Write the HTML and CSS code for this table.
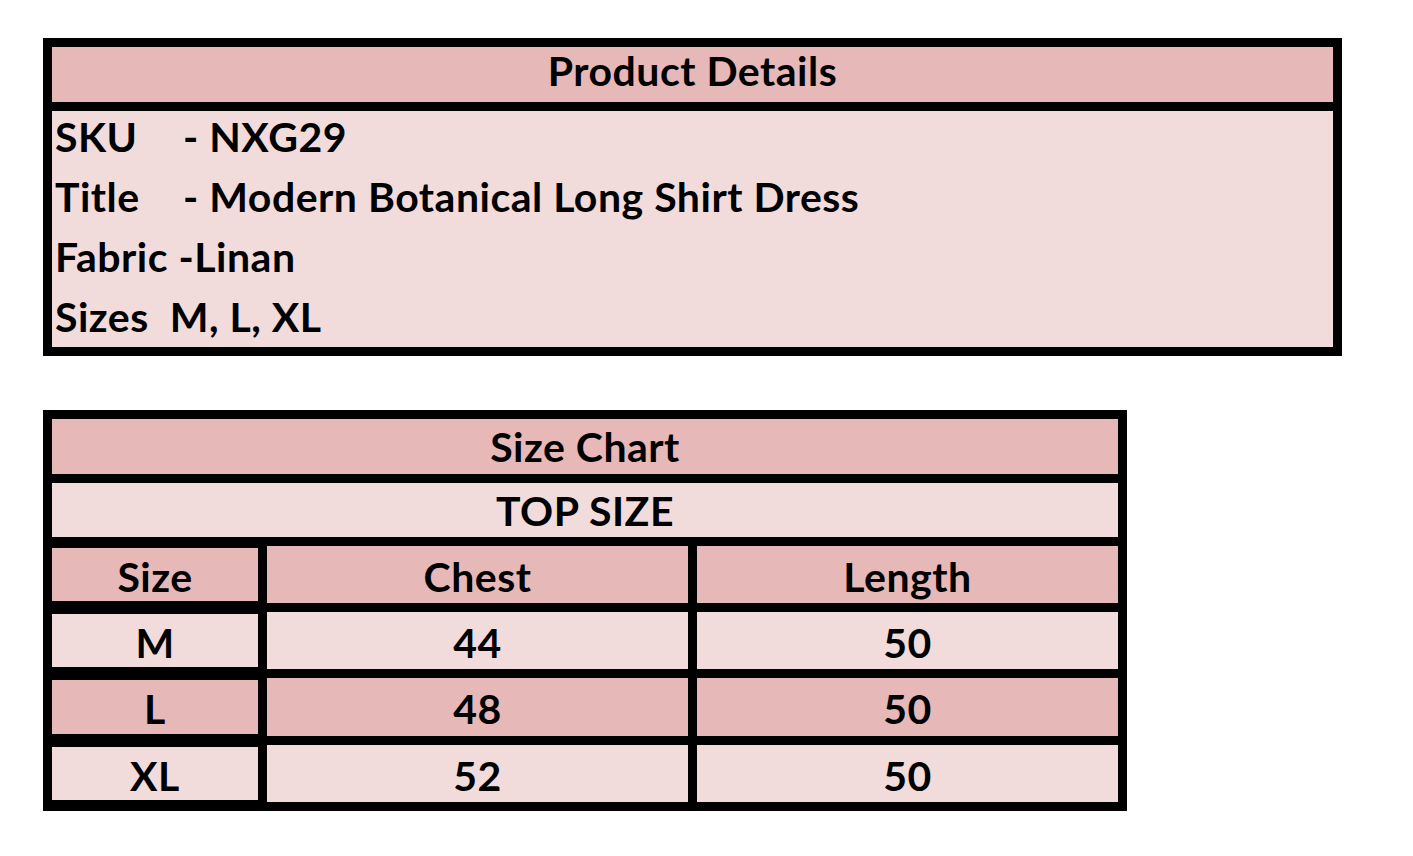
FILE: index.html
```html
<!DOCTYPE html>
<html lang="en">
<head>
<meta charset="utf-8">
<title>Product Details</title>
<link rel="stylesheet" href="styles.css">
</head>
<body>
<main class="page">
  <section class="details">
    <h1 class="details-head">Product Details</h1>
    <div class="details-body">
      <div class="line"><span class="label">SKU</span><span>- NXG29</span></div>
      <div class="line"><span class="label">Title</span><span>- Modern Botanical Long Shirt Dress</span></div>
      <div class="line"><span>Fabric -Linan</span></div>
      <div class="line"><span class="pre">Sizes  M, L, XL</span></div>
    </div>
  </section>

  <section class="chart">
    <div class="cell dark span">Size Chart</div>
    <div class="cell light span">TOP SIZE</div>
    <div class="cell dark first">Size</div>
    <div class="cell dark">Chest</div>
    <div class="cell dark">Length</div>
    <div class="cell light first">M</div>
    <div class="cell light">44</div>
    <div class="cell light">50</div>
    <div class="cell dark first">L</div>
    <div class="cell dark">48</div>
    <div class="cell dark">50</div>
    <div class="cell light first">XL</div>
    <div class="cell light">52</div>
    <div class="cell light">50</div>
  </section>
</main>
</body>
</html>
```

FILE: styles.css
```css
* { box-sizing: border-box; }

html, body {
  margin: 0;
  background: #ffffff;
}

body {
  font-family: "Lato", "Open Sans", sans-serif;
  font-weight: 700;
  color: #000;
  font-size: 41px;
  letter-spacing: 0.5px;
}

.page {
  padding: 38px 0 0 43px;
  display: flex;
  flex-direction: column;
  align-items: flex-start;
  gap: 54px;
}

.details {
  width: 1299px;
  background: #000;
  padding: 9px;
  display: flex;
  flex-direction: column;
  gap: 9px;
}

.details-head {
  margin: 0;
  height: 55px;
  background: #E6B8B7;
  font-size: 41px;
  font-weight: 700;
  display: flex;
  align-items: center;
  justify-content: center;
  padding-bottom: 8px;
}

.details-body {
  height: 236px;
  background: #F2DCDB;
  padding-left: 3px;
}

.line {
  line-height: 60px;
  height: 60px;
  white-space: pre;
  position: relative;
  top: -4px;
}

.label {
  display: inline-block;
  width: 128px;
}

.pre { white-space: pre; }

.chart {
  width: 1084px;
  background: #000;
  padding: 9px;
  display: grid;
  grid-template-columns: 206px 421px 421px;
  grid-template-rows: 55px 54px 57px 57px 58px 57px;
  gap: 9px;
}

.cell {
  display: flex;
  align-items: center;
  justify-content: center;
}

.cell.span { grid-column: 1 / -1; }

.dark { background: #E6B8B7; }
.light { background: #F2DCDB; }

.cell.first {
  box-shadow: inset 0 2px 0 #000, inset 0 -2px 0 #000;
  padding-top: 3px;
}

.chart .cell:not(.span):not(.first) { padding-top: 3px; }
```
